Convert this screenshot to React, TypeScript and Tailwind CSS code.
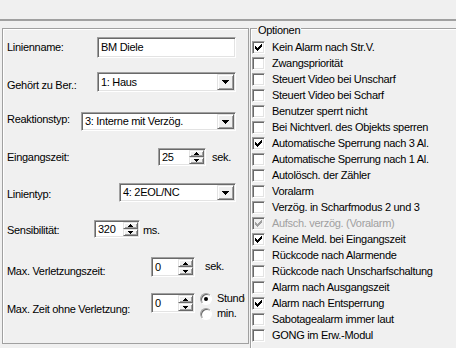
import React from "react";

type Opt = { label: string; checked?: boolean; disabled?: boolean };

const options: Opt[] = [
  { label: "Kein Alarm nach Str.V.", checked: true },
  { label: "Zwangspriorität" },
  { label: "Steuert Video bei Unscharf" },
  { label: "Steuert Video bei Scharf" },
  { label: "Benutzer sperrt nicht" },
  { label: "Bei Nichtverl. des Objekts sperren" },
  { label: "Automatische Sperrung nach 3 Al.", checked: true },
  { label: "Automatische Sperrung nach 1 Al." },
  { label: "Autolösch. der Zähler" },
  { label: "Voralarm" },
  { label: "Verzög. in Scharfmodus 2 und 3" },
  { label: "Aufsch. verzög. (Voralarm)", checked: true, disabled: true },
  { label: "Keine Meld. bei Eingangszeit", checked: true },
  { label: "Rückcode nach Alarmende" },
  { label: "Rückcode nach Unscharfschaltung" },
  { label: "Alarm nach Ausgangszeit" },
  { label: "Alarm nach Entsperrung", checked: true },
  { label: "Sabotagealarm immer laut" },
  { label: "GONG im Erw.-Modul" },
];

function DownArrow() {
  return (
    <svg width="7" height="4" viewBox="0 0 7 4" shapeRendering="crispEdges">
      <path d="M0 0h7v1h-1v1h-1v1h-1v1h-1v-1h-1v-1h-1v-1h-1z" fill="#000" />
    </svg>
  );
}

function SmallArrow({ up }: { up?: boolean }) {
  return (
    <svg width="5" height="3" viewBox="0 0 5 3" shapeRendering="crispEdges">
      {up ? (
        <path d="M2 0h1v1h1v1h1v1h-5v-1h1v-1h1z" fill="#000" />
      ) : (
        <path d="M0 0h5v1h-1v1h-1v1h-1v-1h-1v-1h-1z" fill="#000" />
      )}
    </svg>
  );
}

function TextBox({ value, className }: { value: string; className: string }) {
  return (
    <div
      className={`flex items-center bg-white pl-[2px] border border-t-[#a0a0a0] border-l-[#a0a0a0] border-r-white border-b-white shadow-[inset_1px_1px_0_#696969,inset_-1px_-1px_0_#e3e3e3] ${className}`}
    >
      <span className="pl-[1px]">{value}</span>
    </div>
  );
}

function Combo({ value, className }: { value: string; className: string }) {
  return (
    <div
      className={`flex bg-white p-[1px] border border-t-[#a0a0a0] border-l-[#a0a0a0] border-r-white border-b-white shadow-[inset_1px_1px_0_#696969,inset_-1px_-1px_0_#e3e3e3] ${className}`}
    >
      <span className="flex flex-1 items-center pl-[2px]">{value}</span>
      <div className="flex w-[17px] items-center justify-center bg-[#f0f0f0] border border-t-[#e3e3e3] border-l-[#e3e3e3] border-r-[#696969] border-b-[#696969] shadow-[inset_1px_1px_0_#fff,inset_-1px_-1px_0_#a0a0a0]">
        <DownArrow />
      </div>
    </div>
  );
}

function Spin({ value, className }: { value: string; className: string }) {
  return (
    <div
      className={`flex bg-white p-[1px] border border-t-[#a0a0a0] border-l-[#a0a0a0] border-r-white border-b-white shadow-[inset_1px_1px_0_#696969,inset_-1px_-1px_0_#e3e3e3] ${className}`}
    >
      <span className="flex flex-1 items-center pl-[2px]">{value}</span>
      <div className="flex w-[15px] flex-col">
        <div className="flex flex-1 items-center justify-center bg-[#f0f0f0] border border-t-[#e3e3e3] border-l-[#e3e3e3] border-r-[#696969] border-b-[#696969] shadow-[inset_1px_1px_0_#fff,inset_-1px_-1px_0_#a0a0a0]">
          <SmallArrow up />
        </div>
        <div className="flex flex-1 items-center justify-center bg-[#f0f0f0] border border-t-[#e3e3e3] border-l-[#e3e3e3] border-r-[#696969] border-b-[#696969] shadow-[inset_1px_1px_0_#fff,inset_-1px_-1px_0_#a0a0a0]">
          <SmallArrow />
        </div>
      </div>
    </div>
  );
}

function Radio({ checked }: { checked?: boolean }) {
  return (
    <div className="flex h-[12px] w-[12px] shrink-0 items-center justify-center rounded-full bg-white border border-t-[#a0a0a0] border-l-[#a0a0a0] border-r-white border-b-white shadow-[inset_1px_1px_0_#696969]">
      {checked ? <div className="h-[4px] w-[4px] rounded-full bg-black" /> : null}
    </div>
  );
}

function Check({ checked, disabled }: { checked?: boolean; disabled?: boolean }) {
  return (
    <div
      className={`flex h-[13px] w-[13px] shrink-0 items-center justify-center border border-t-[#a0a0a0] border-l-[#a0a0a0] border-r-white border-b-white shadow-[inset_1px_1px_0_#696969,inset_-1px_-1px_0_#e3e3e3] ${
        disabled ? "bg-[#f0f0f0]" : "bg-white"
      }`}
    >
      {checked ? (
        <svg width="7" height="7" viewBox="0 0 7 7" shapeRendering="crispEdges">
          <path
            d="M6 0h1v3h-1v1h-1v1h-1v1h-1v1h-1v-1h-1v-1h-1v-3h1v1h1v1h1v-1h1v-1h1z"
            fill={disabled ? "#a0a0a0" : "#000"}
          />
        </svg>
      ) : null}
    </div>
  );
}

export default function App() {
  return (
    <div className="h-[348px] w-[456px] overflow-hidden bg-[#f0f0f0] font-['Liberation_Sans',Arial,sans-serif] text-[11px] leading-[13px] tracking-[-0.3px] text-black">
      <div className="h-[19px]" />
      <div className="h-[2px] bg-[#a0a0a0]" />
      <div className="flex items-start pl-[2px] pt-[6px]">
        {/* left panel */}
        <div className="mt-[1px] h-[316px] w-[247px] shrink-0 overflow-hidden border border-[#a0a0a0] pl-[4px] shadow-[inset_1px_1px_0_#fff]">
          <div className="mt-[8px] flex items-start">
            <span className="mt-[4px] w-[90px] shrink-0">Linienname:</span>
            <TextBox value="BM Diele" className="h-[21px] w-[139px]" />
          </div>
          <div className="mt-[14px] flex items-start">
            <span className="mt-[7px] w-[90px] shrink-0">Gehört zu Ber.:</span>
            <Combo value="1: Haus" className="h-[20px] w-[139px]" />
          </div>
          <div className="mt-[20px] flex items-start">
            <span className="mt-[1px] w-[74px] shrink-0">Reaktionstyp:</span>
            <Combo value="3: Interne mit Verzög." className="h-[19px] w-[155px]" />
          </div>
          <div className="mt-[17px] flex items-start">
            <span className="mt-[3px] w-[151px] shrink-0">Eingangszeit:</span>
            <Spin value="25" className="h-[18px] w-[48px]" />
            <span className="ml-[6px] mt-[3px]">sek.</span>
          </div>
          <div className="mt-[17px] flex items-start">
            <span className="mt-[5px] w-[112px] shrink-0">Linientyp:</span>
            <Combo value="4: 2EOL/NC" className="h-[19px] w-[117px]" />
          </div>
          <div className="mt-[18px] flex items-start">
            <span className="mt-[4px] w-[87px] shrink-0">Sensibilität:</span>
            <Spin value="320" className="h-[18px] w-[46px]" />
            <span className="ml-[3px] mt-[4px]">ms.</span>
          </div>
          <div className="mt-[19px] flex items-start">
            <span className="mt-[8px] w-[144px] shrink-0">Max. Verletzungszeit:</span>
            <Spin value="0" className="h-[20px] w-[44px]" />
            <span className="ml-[10px] mt-[3px]">sek.</span>
          </div>
          <div className="mt-[15px] flex items-start">
            <span className="mt-[10px] w-[144px] shrink-0">Max. Zeit ohne Verletzung:</span>
            <Spin value="0" className="h-[20px] w-[44px]" />
            <div className="-mt-[2px] ml-[5px] flex w-[45px] flex-col overflow-hidden">
              <div className="flex h-[15px] items-center gap-[5px] whitespace-nowrap">
                <Radio checked />
                <span>Stunde</span>
              </div>
              <div className="flex h-[15px] items-center gap-[5px]">
                <Radio />
                <span>min.</span>
              </div>
            </div>
          </div>
        </div>

        {/* Optionen group */}
        <div className="ml-[1px] mt-[1px] h-[340px] w-[220px] shrink-0 border border-[#a0a0a0] shadow-[inset_1px_1px_0_#fff]">
          <div className="-mt-[5px] ml-[6px] w-fit bg-[#f0f0f0] px-[1px]">Optionen</div>
          <div className="mt-[2px] flex flex-col pl-[1px]">
            {options.map((o) => (
              <div key={o.label} className="flex h-[16px] items-center whitespace-nowrap">
                <Check checked={o.checked} disabled={o.disabled} />
                <span className={`ml-[7px] ${o.disabled ? "text-[#a0a0a0]" : ""}`}>{o.label}</span>
              </div>
            ))}
          </div>
        </div>
      </div>
    </div>
  );
}
